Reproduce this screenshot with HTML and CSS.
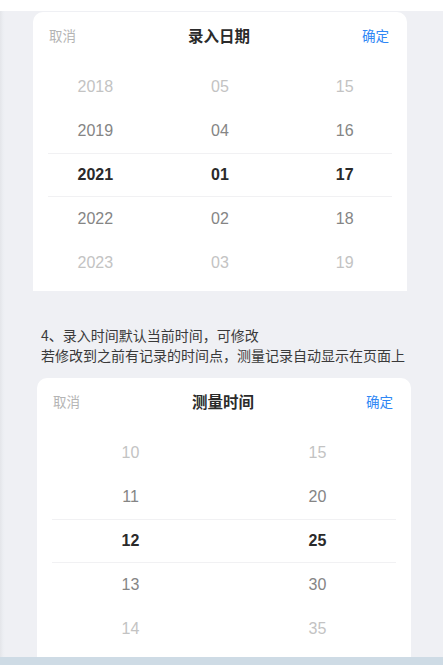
FILE: index.html
```html
<!DOCTYPE html>
<html lang="zh-CN">
<head>
<meta charset="utf-8">
<title>录入日期</title>
<link rel="stylesheet" href="styles.css">
</head>
<body>
<div class="topbar"></div>
<main class="page">
  <section class="card card-date">
    <header class="card-head">
      <span class="btn-cancel">取消</span>
      <span class="card-title">录入日期</span>
      <span class="btn-ok">确定</span>
    </header>
    <div class="picker">
      <div class="row far"><span>2018</span><span>05</span><span>15</span></div>
      <div class="row near"><span>2019</span><span>04</span><span>16</span></div>
      <div class="row sel"><span>2021</span><span>01</span><span>17</span></div>
      <div class="row near"><span>2022</span><span>02</span><span>18</span></div>
      <div class="row far"><span>2023</span><span>03</span><span>19</span></div>
    </div>
  </section>

  <p class="note">4、录入时间默认当前时间，可修改<br>若修改到之前有记录的时间点，测量记录自动显示在页面上</p>

  <section class="card card-time">
    <header class="card-head">
      <span class="btn-cancel">取消</span>
      <span class="card-title">测量时间</span>
      <span class="btn-ok">确定</span>
    </header>
    <div class="picker two">
      <div class="row far"><span>10</span><span>15</span></div>
      <div class="row near"><span>11</span><span>20</span></div>
      <div class="row sel"><span>12</span><span>25</span></div>
      <div class="row near"><span>13</span><span>30</span></div>
      <div class="row far"><span>14</span><span>35</span></div>
    </div>
  </section>
</main>
<div class="bottombar"></div>
</body>
</html>
```
FILE: styles.css
```css
html, body {
  margin: 0;
  padding: 0;
}
body {
  width: 443px;
  height: 665px;
  overflow: hidden;
  background: #eff0f4;
  font-family: "Noto Sans CJK SC", "Liberation Sans", sans-serif;
}
.topbar {
  height: 11px;
  background: #ffffff;
}
.page {
  height: 646px;
  padding-top: 1px;
  box-sizing: border-box;
  background: linear-gradient(to right, #e4e5e9 0, #eceef2 3px, #eff0f4 5px);
}
.card {
  width: 374px;
  height: 279px;
  background: #ffffff;
  border-radius: 10px 10px 0 0;
  box-sizing: border-box;
}
.card-date {
  margin-left: 33px;
}
.card-time {
  margin-left: 37px;
}
.card-head {
  height: 45px;
  padding: 0 18px 0 16px;
  display: flex;
  align-items: center;
  justify-content: space-between;
  margin-bottom: 8px;
}
.btn-cancel {
  font-size: 13.5px;
  color: #b4b4b4;
  line-height: 20px;
  width: 40px;
}
.btn-ok {
  font-size: 13.5px;
  color: #2f87f5;
  line-height: 20px;
  width: 40px;
  text-align: right;
}
.card-title {
  font-size: 15.5px;
  font-weight: 700;
  color: #2b2b2b;
  line-height: 20px;
}
.picker {
  display: flex;
  flex-direction: column;
}
.row {
  height: 44px;
  display: grid;
  grid-template-columns: repeat(3, 1fr);
  align-items: center;
  text-align: center;
  font-family: "Liberation Sans", "Noto Sans CJK SC", sans-serif;
  font-size: 16px;
}
.picker.two .row {
  grid-template-columns: repeat(2, 1fr);
}
.far {
  color: #c3c3c3;
}
.near {
  color: #858585;
}
.sel {
  color: #2a2a2a;
  font-weight: 700;
  background:
    linear-gradient(#f1f1f3, #f1f1f3) center top / calc(100% - 30px) 1px no-repeat,
    linear-gradient(#f1f1f3, #f1f1f3) center bottom / calc(100% - 30px) 1px no-repeat;
}
.note {
  margin: 34px 0 13px 41px;
  font-size: 14px;
  line-height: 20px;
  color: #3a3a3a;
  white-space: nowrap;
}
.bottombar {
  height: 8px;
  background: #cedbe5;
}
```
